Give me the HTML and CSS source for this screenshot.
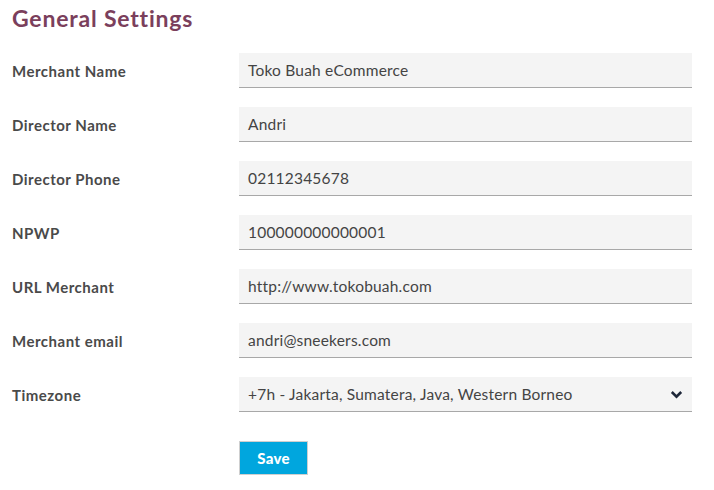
FILE: index.html
```html
<!DOCTYPE html>
<html>
<head>
<meta charset="utf-8">
<link rel="stylesheet" href="styles.css">
</head>
<body>
<div class="page">
  <h1 class="title">General Settings</h1>
  <form class="form">
    <label class="label">Merchant Name</label>
    <div class="field">Toko Buah eCommerce</div>
    <label class="label">Director Name</label>
    <div class="field">Andri</div>
    <label class="label">Director Phone</label>
    <div class="field">02112345678</div>
    <label class="label">NPWP</label>
    <div class="field">100000000000001</div>
    <label class="label">URL Merchant</label>
    <div class="field">http://www.tokobuah.com</div>
    <label class="label">Merchant email</label>
    <div class="field">andri@sneekers.com</div>
    <label class="label">Timezone</label>
    <div class="field select">
      <span>+7h - Jakarta, Sumatera, Java, Western Borneo</span>
      <svg class="chev" width="13" height="9" viewBox="0 0 13 9"><path d="M1.8 2 L6.5 6.6 L11.2 2" fill="none" stroke="#1d2638" stroke-width="2.6"/></svg>
    </div>
    <span></span>
    <div class="actions"><button type="button" class="save">Save</button></div>
  </form>
</div>
</body>
</html>
```
FILE: styles.css
```css
html, body { margin: 0; padding: 0; background: #fff; }
body { font-family: "Lato", "Liberation Sans", sans-serif; }
.page { padding: 0 22px 0 12px; }
.title {
  margin: 0;
  padding-top: 3px;
  height: 50px;
  font-size: 23px;
  line-height: 30px;
  font-weight: 700;
  letter-spacing: 0.8px;
  color: #7b3f5c;
}
.form {
  display: grid;
  grid-template-columns: 227px 453px;
  row-gap: 19px;
  align-items: center;
}
.label {
  font-size: 15px;
  font-weight: 700;
  letter-spacing: 0.5px;
  color: #4a4a4a;
}
.field {
  height: 34px;
  background: #f4f4f4;
  border-bottom: 1px solid #a8a8a8;
  padding: 0 9px;
  display: flex;
  align-items: center;
  font-size: 15.5px;
  letter-spacing: 0.2px;
  color: #444;
}
.select { justify-content: space-between; padding-right: 9px; }
.chev { display: block; }
.actions { padding-top: 10px; }
.save {
  width: 69px;
  height: 34px;
  background: #00a6de;
  border: 1px solid #cfcfcf;
  color: #fff;
  font-family: "Lato", "Liberation Sans", sans-serif;
  font-weight: 900;
  font-size: 15px;
  letter-spacing: 0.3px;
  padding: 0;
  cursor: pointer;
}
```
